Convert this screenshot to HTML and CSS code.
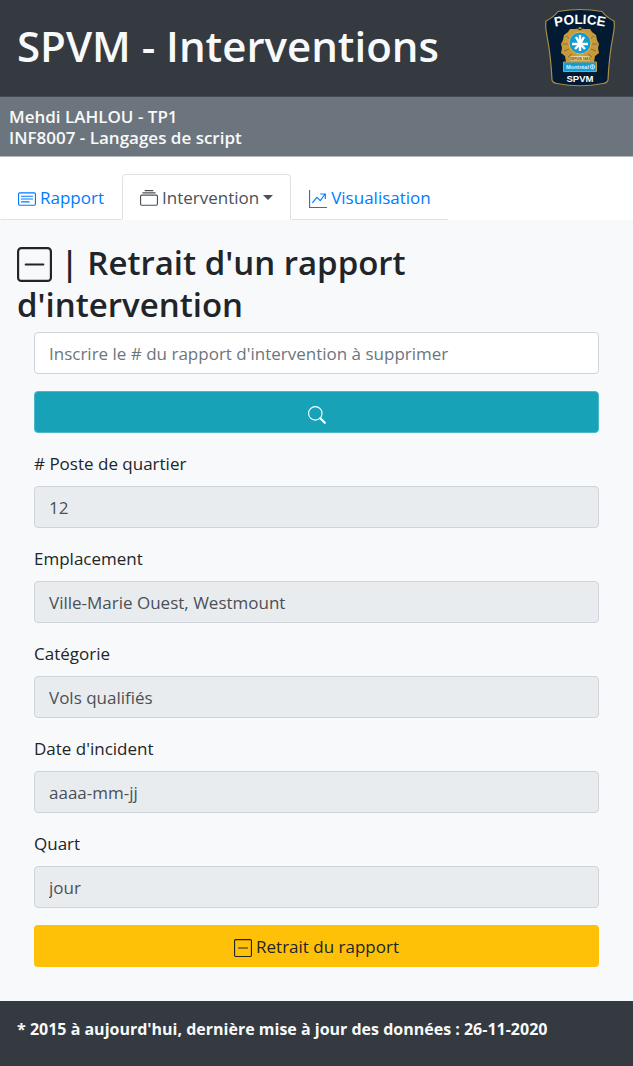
FILE: index.html
```html
<!DOCTYPE html>
<html lang="fr">
<head>
<meta charset="utf-8">
<meta name="viewport" content="width=device-width, initial-scale=1">
<title>SPVM - Interventions</title>
<link rel="stylesheet" href="styles.css">
</head>
<body>
<header class="site-header">
  <h1 class="site-title">SPVM - Interventions</h1>
  <svg class="badge" viewBox="0 0 72 80" role="img" aria-label="Police SPVM">
    <path d="M14 3.500Q36-.500 58 3.500Q62 9 70 13Q71 19 69 28Q65 49 64 72Q63 75 59 75.500Q36 80 13 75.500Q9 75 8 72Q7 49 3 28Q1 19 2 13Q10 9 14 3.500Z" fill="#021b33" stroke="#a98c48" stroke-width="1.200"/>
    <path id="arch" d="M6 20Q36 12 66 20" fill="none"/>
    <text class="badge-text" font-size="13.500" text-anchor="middle"><textPath href="#arch" startOffset="50%">POLICE</textPath></text>
    <path d="M36 19l4 2 6 0 2 3 4 3 1 5 2 4-1 4 1 5-4 3-1 6H22l-1-6-4-3 1-5-1-4 2-4 1-5 4-3 2-3 6 0Z" fill="#c99a3b"/>
    <path d="M22 28l4 3M50 28l-4 3M19 36h5M48 36h5M20 43l5-2M52 43l-5-2M24 49l4-3M48 49l-4-3" stroke="#8a6c2c"/>
    <path d="M33 20l3 2 3-2" stroke="#021b33" fill="none"/>
    <circle cx="36" cy="35" r="11" fill="#159bd3" stroke="#e2b64c"/>
    <path d="M36 27v16M28 36h16M32 29l4 7 4-7M31 41l5-5 5 5" stroke="#fff" stroke-width="2.400" fill="none"/>
    <path d="M26 48.500Q36 47 46 48.500V52.500H26Z" fill="#ead59b"/>
    <text class="badge-small" x="36" y="51.800" font-size="3.200" text-anchor="middle" fill="#5d4b20">DEPUIS 1843</text>
    <path d="M19.500 54h33v9.500h-33Z" fill="#159bd3" stroke="#c99a3b"/>
    <text class="badge-small" x="22" y="60.800" font-size="5.500" fill="#d9f1fb">Montréal</text>
    <circle cx="48.500" cy="58.800" r="2.200" fill="none" stroke="#d9f1fb" stroke-width=".8"/>
    <path d="M48.500 56.600v4.400M46.300 58.800h4.400" stroke="#d9f1fb" stroke-width=".6"/>
    <text class="badge-text" x="36" y="73.500" font-size="9.500" text-anchor="middle">SPVM</text>
  </svg>
</header>
<div class="course">
  <p>Mehdi LAHLOU - TP1</p>
  <p>INF8007 - Langages de script</p>
</div>
<nav class="tabs">
  <a class="tab" href="#rapport">
    <svg class="icon" viewBox="0 0 16 16" fill="none" stroke="currentColor" aria-hidden="true"><rect x=".5" y="2.500" width="15" height="11" rx="1"/><path d="M3 5.500h10M3 8h10M3 10.500h7" stroke-linecap="round"/></svg>
    <span>Rapport</span>
  </a>
  <a class="tab tab-active" href="#intervention">
    <svg class="icon" viewBox="0 0 16 16" fill="none" stroke="currentColor" aria-hidden="true"><rect x=".5" y="4.500" width="15" height="9" rx="1"/><path d="M2.500 2.500h11M4.500.5h7" stroke-linecap="round"/></svg>
    <span class="tab-menu">Intervention</span>
  </a>
  <a class="tab" href="#visualisation">
    <svg class="icon" viewBox="0 0 16 16" fill="none" stroke="currentColor" aria-hidden="true"><path d="M.5 0v15.500H16M3 11.500l4-5 3 3 4-5.500M10 3.500h4.500V8"/></svg>
    <span>Visualisation</span>
  </a>
</nav>
<main class="content">
  <h2 class="page-title"><svg class="title-icon" viewBox="0 0 16 16" fill="none" stroke="currentColor" aria-hidden="true"><rect x=".5" y=".5" width="15" height="15" rx="1.500"/><path d="M4 8h8" stroke-linecap="round"/></svg> | Retrait d'un rapport d'intervention</h2>
  <form class="form">
    <input class="field" type="text" aria-label="# du rapport d'intervention" placeholder="Inscrire le # du rapport d'intervention à supprimer">
    <button class="btn btn-search" type="button" aria-label="Rechercher"><svg class="icon" viewBox="0 0 16 16" fill="none" stroke="currentColor" aria-hidden="true"><circle cx="6.500" cy="6.500" r="6"/><path d="M10.900 10.900l4 4" stroke-width="2" stroke-linecap="round"/></svg></button>
    <div class="group"><label for="poste"># Poste de quartier</label><input class="field" id="poste" type="text" value="12" disabled></div>
    <div class="group"><label for="lieu">Emplacement</label><input class="field" id="lieu" type="text" value="Ville-Marie Ouest, Westmount" disabled></div>
    <div class="group"><label for="categorie">Catégorie</label><input class="field" id="categorie" type="text" value="Vols qualifiés" disabled></div>
    <div class="group"><label for="date">Date d'incident</label><input class="field" id="date" type="text" value="aaaa-mm-jj" disabled></div>
    <div class="group"><label for="quart">Quart</label><input class="field" id="quart" type="text" value="jour" disabled></div>
    <button class="btn btn-remove" type="button"><svg class="icon" viewBox="0 0 16 16" fill="none" stroke="currentColor" aria-hidden="true"><rect x=".5" y=".5" width="15" height="15" rx="1"/><path d="M4 8h8" stroke-linecap="round"/></svg><span>Retrait du rapport</span></button>
  </form>
</main>
<footer class="site-footer">* 2015 à aujourd'hui, dernière mise à jour des données : 26-11-2020</footer>
</body>
</html>
```
FILE: styles.css
```css
* { box-sizing: border-box; }
body {
  margin: 0;
  min-height: 100vh;
  display: flex;
  flex-direction: column;
  background: #f8f9fa;
  color: #212529;
  font-family: "Open Sans", "Noto Sans", sans-serif;
  font-size: 17px;
  line-height: 27px;
}
h1, h2, p { margin: 0; }
.site-header {
  display: flex;
  align-items: center;
  justify-content: space-between;
  padding: 8px 17px;
  background: #343a40;
  border-bottom: 1px solid #454b51;
}
.site-title {
  color: #f8f9fa;
  font-size: 42px;
  font-weight: 600;
  line-height: 52px;
  padding-bottom: 4px;
}
.badge { width: 72px; height: 80px; }
.badge-text { fill: #fff; font-family: "Liberation Sans", sans-serif; font-weight: 700; }
.badge-small { font-family: "Liberation Sans", sans-serif; font-weight: 700; }
.course {
  padding: 9px 9px 8px;
  background: #6c757d;
  border-bottom: 1px solid #b5babe;
  color: #f8f9fa;
  font-weight: 600;
  line-height: 21px;
}
.tabs {
  display: flex;
  padding-top: 17px;
  background: #fff;
}
.tab {
  display: flex;
  align-items: center;
  gap: 4px;
  padding: 9px 17px 8px;
  border: 1px solid transparent;
  border-bottom-color: #dee2e6;
  color: #007bff;
  text-decoration: none;
}
.tab-active {
  border-color: #dee2e6 #dee2e6 #fff;
  border-radius: 4px 4px 0 0;
  color: #495057;
}
.tab-menu::after {
  content: "";
  display: inline-block;
  margin-left: 4px;
  vertical-align: 4px;
  border: 5px solid transparent;
  border-top-color: currentColor;
  border-bottom: 0;
}
.icon { width: 18px; height: 18px; flex: none; margin-top: 3px; }
.content { flex: 1; padding: 22px 17px 34px; }
.page-title {
  font-size: 33px;
  font-weight: 600;
  line-height: 42px;
  margin-bottom: 6px;
}
.title-icon { width: 35px; height: 35px; vertical-align: -7px; }
.form {
  display: flex;
  flex-direction: column;
  gap: 17px;
  padding: 0 17px;
}
.group { display: flex; flex-direction: column; gap: 9px; }
.field {
  width: 100%;
  height: 42px;
  padding: 0 14px;
  border: 1px solid #ced4da;
  border-radius: 4px;
  background: #fff;
  color: #495057;
  font: inherit;
}
.field::placeholder { color: #6c757d; opacity: 1; }
.field:disabled { background: #e9ecef; }
.btn {
  display: flex;
  align-items: center;
  justify-content: center;
  gap: 4px;
  height: 42px;
  padding: 0 13px;
  border: 1px solid transparent;
  border-radius: 4px;
  font: inherit;
}
.btn-search { background: #17a2b8; border-color: #4db8c9; color: #fff; }
.btn-search .icon { margin-top: 5px; }
.btn-remove { background: #ffc107; color: #212529; }
.site-footer {
  padding: 15px 17px 23px;
  background: #343a40;
  color: #f8f9fa;
  font-size: 16px;
  font-weight: 700;
}
```
